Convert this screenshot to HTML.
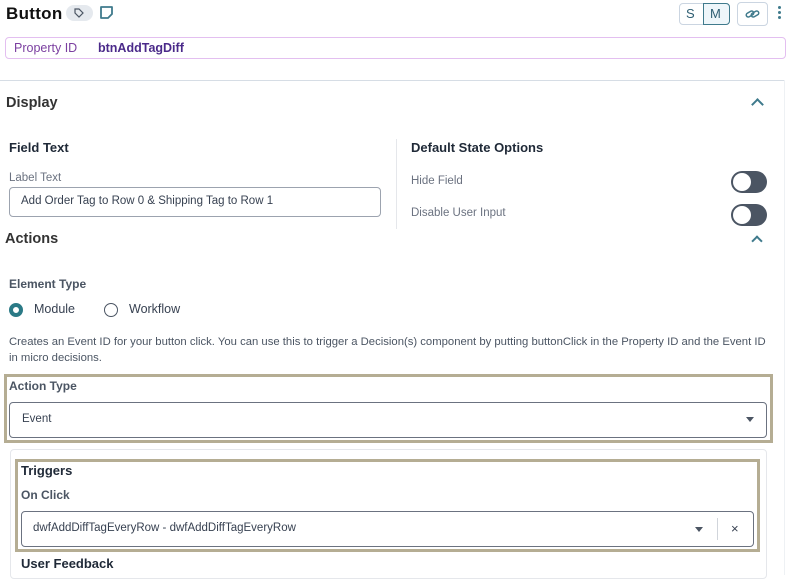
<!DOCTYPE html>
<html><head><meta charset="utf-8"><style>
*{box-sizing:border-box;margin:0;padding:0}
body{width:788px;height:575px;overflow:hidden;background:#fff;font-family:"Liberation Sans",sans-serif;color:#1f2937;position:relative}
.a{position:absolute;white-space:nowrap}
.h{font-weight:bold;font-size:13px;color:#1f2937}
.l{font-size:11.5px;color:#6b7280}
.box{position:absolute;border:1px solid #9ca3af;border-radius:4px;background:#fff}
.tog{position:absolute;width:36px;height:22px;border-radius:11px;background:#4b5563}
.tog::after{content:"";position:absolute;left:2px;top:2px;width:18px;height:18px;border-radius:50%;background:#fff}
.chev{position:absolute;width:9px;height:9px;border-left:2px solid #3f7a8c;border-top:2px solid #3f7a8c;transform:rotate(45deg)}
.tan{position:absolute;border:3px solid #b5ad93}
</style></head><body>
<div class="a" style="left:6px;top:4px;font-size:17px;font-weight:bold;color:#111;letter-spacing:0.3px">Button</div>
<div class="a" style="left:66px;top:5px;width:27px;height:16px;border-radius:8px;background:#e5e9ee"></div>
<svg class="a" style="left:73px;top:7px" width="12" height="12" viewBox="0 0 12 12"><path d="M2 2h4l4 4-4 4-4-4z" fill="none" stroke="#4b5563" stroke-width="1.2"/></svg>
<svg class="a" style="left:99px;top:5px" width="15" height="15" viewBox="0 0 15 15"><path d="M2 2h11v7l-4 4H2z" fill="none" stroke="#3f7a8c" stroke-width="1.8" stroke-linejoin="round"/></svg>
<div class="a" style="left:679px;top:3px;width:51px;height:22px;border:1px solid #cbd5e1;border-radius:4px"></div>
<div class="a" style="left:703px;top:3px;width:27px;height:22px;border:1px solid #3f7a8c;border-radius:0 4px 4px 0;background:#eef6fa"></div>
<div class="a" style="left:686px;top:6px;font-size:13px;color:#2f5f73">S</div>
<div class="a" style="left:710px;top:6px;font-size:13px;color:#2f5f73">M</div>
<div class="a" style="left:737px;top:2px;width:31px;height:24px;border:1px solid #cbd5e1;border-radius:4px"></div>
<svg class="a" style="left:745px;top:7px" width="15" height="14" viewBox="0 0 15 14"><g fill="none" stroke="#3f7a8c" stroke-width="1.5"><rect x="1" y="5" width="8" height="4" rx="2" transform="rotate(-30 5 7)"/><rect x="6" y="5" width="8" height="4" rx="2" transform="rotate(-30 10 7)"/></g></svg>
<div class="a" style="left:778px;top:6px;width:3px;height:3px;border-radius:50%;background:#3f7a8c;box-shadow:0 5px 0 #3f7a8c,0 10px 0 #3f7a8c"></div>
<div class="a" style="left:5px;top:37px;width:781px;height:22px;border:1px solid #e3bff0;border-radius:4px"></div>
<div class="a" style="left:14px;top:41px;font-size:12.5px;color:#7b3fa0">Property ID</div>
<div class="a" style="left:98px;top:41px;font-size:12.5px;font-weight:bold;color:#4b2a8a">btnAddTagDiff</div>
<div class="a" style="left:0;top:80px;width:784px;height:1px;background:#d6dde5"></div>
<div class="a" style="left:784px;top:80px;width:1px;height:495px;background:#eef1f4"></div>
<div class="a" style="left:6px;top:95px;font-size:14.5px;font-weight:bold;color:#333">Display</div>
<div class="chev" style="left:753px;top:100px"></div>
<div class="a h" style="left:9px;top:140px">Field Text</div>
<div class="a l" style="left:9px;top:172px">Label Text</div>
<div class="box" style="left:9px;top:187px;width:372px;height:30px"></div>
<div class="a" style="left:21px;top:195px;font-size:11.5px;color:#374151">Add Order Tag to Row 0 &amp; Shipping Tag to Row 1</div>
<div class="a" style="left:396px;top:139px;width:1px;height:90px;background:#e5e7eb"></div>
<div class="a h" style="left:411px;top:140px">Default State Options</div>
<div class="a l" style="left:411px;top:175px">Hide Field</div>
<div class="a l" style="left:411px;top:207px">Disable User Input</div>
<div class="tog" style="left:731px;top:171px"></div>
<div class="tog" style="left:731px;top:204px"></div>
<div class="a" style="left:5px;top:231px;font-size:14.5px;font-weight:bold;color:#333">Actions</div>
<div class="chev" style="left:753px;top:237px;width:8px;height:8px"></div>
<div class="a" style="left:9px;top:277px;font-size:12px;font-weight:bold;color:#4b5563">Element Type</div>
<div class="a" style="left:9px;top:303px;width:14px;height:14px;border-radius:50%;border:4px solid #2b7a86"></div>
<div class="a" style="left:34px;top:302px;font-size:12.5px;color:#374151">Module</div>
<div class="a" style="left:104px;top:303px;width:14px;height:14px;border-radius:50%;border:1px solid #4b5563"></div>
<div class="a" style="left:129px;top:302px;font-size:12.5px;color:#374151">Workflow</div>
<div class="a" style="left:9px;top:334px;font-size:11.3px;line-height:16px;color:#4b5563;white-space:normal;width:762px">Creates an Event ID for your button click. You can use this to trigger a Decision(s) component by putting buttonClick in the Property ID and the Event ID in micro decisions.</div>
<div class="tan" style="left:4px;top:374px;width:769px;height:69px"></div>
<div class="a" style="left:9px;top:379px;font-size:12px;font-weight:bold;color:#4b5563">Action Type</div>
<div class="box" style="left:9px;top:402px;width:758px;height:36px;border-color:#6b7280"></div>
<div class="a" style="left:22px;top:413px;font-size:11.5px;color:#374151">Event</div>
<div class="a" style="left:746px;top:417px;width:0;height:0;border-left:4px solid transparent;border-right:4px solid transparent;border-top:5px solid #4b5563"></div>
<div class="a" style="left:10px;top:449px;width:757px;height:130px;border:1px solid #e5e7eb;border-radius:4px"></div>
<div class="tan" style="left:15px;top:459px;width:745px;height:93px"></div>
<div class="a h" style="left:21px;top:463px">Triggers</div>
<div class="a" style="left:21px;top:488px;font-size:12px;font-weight:bold;color:#4b5563">On Click</div>
<div class="box" style="left:21px;top:511px;width:733px;height:36px;border-color:#6b7280"></div>
<div class="a" style="left:33px;top:522px;font-size:11.5px;color:#374151">dwfAddDiffTagEveryRow - dwfAddDiffTagEveryRow</div>
<div class="a" style="left:695px;top:527px;width:0;height:0;border-left:4px solid transparent;border-right:4px solid transparent;border-top:5px solid #4b5563"></div>
<div class="a" style="left:717px;top:518px;width:1px;height:22px;background:#d1d5db"></div>
<div class="a" style="left:731px;top:521px;font-size:13px;color:#374151">×</div>
<div class="a h" style="left:21px;top:556px">User Feedback</div>
</body></html>
